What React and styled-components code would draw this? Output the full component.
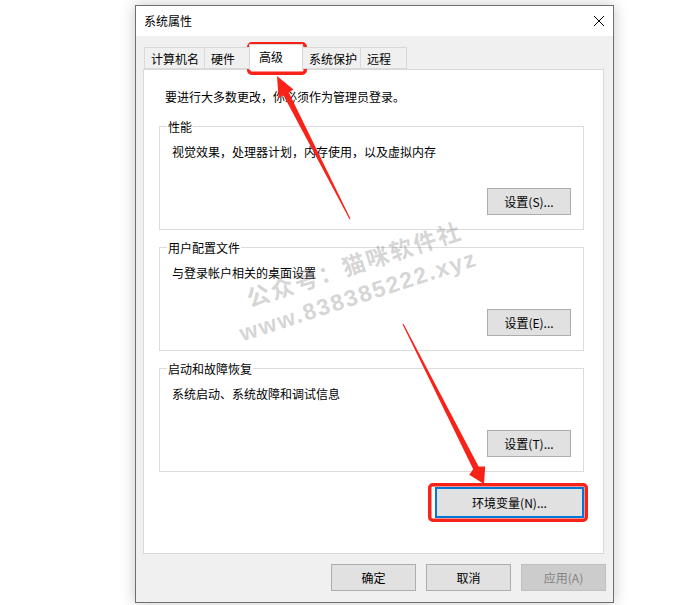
import styled, { createGlobalStyle } from "styled-components";

const GlobalStyle = createGlobalStyle`
  html, body {
    margin: 0;
    padding: 0;
    background: #fff;
  }
  body {
    font-family: "Noto Sans CJK SC", "Microsoft YaHei", sans-serif;
    font-size: 12px;
    color: #000;
  }
`;

const Page = styled.div`
  position: relative;
  width: 694px;
  height: 605px;
  padding: 5px 0 0 135px;
  box-sizing: border-box;
  overflow: hidden;
`;

const Window = styled.div`
  width: 479px;
  height: 598px;
  box-sizing: border-box;
  border: 1px solid #6f6f6f;
  box-shadow: 0 0 14px rgba(0, 0, 0, 0.22);
  background: #f0f0f0;
  display: flex;
  flex-direction: column;
`;

const TitleBar = styled.div`
  height: 30px;
  flex-shrink: 0;
  background: #fff;
  display: flex;
  align-items: center;
  justify-content: space-between;
  padding: 0 9px 0 8px;
  line-height: 16px;
`;

const Body = styled.div`
  flex: 1;
  display: flex;
  flex-direction: column;
  padding: 8px 9px 11px 7px;
`;

const TabStrip = styled.div`
  height: 25px;
  display: flex;
  align-items: flex-end;
  padding-left: 1px;
`;

const Tab = styled.div`
  position: relative;
  z-index: ${(p) => (p.$active ? 2 : 1)};
  box-sizing: border-box;
  width: ${(p) => p.$w}px;
  height: ${(p) => (p.$active ? 26 : 22)}px;
  margin-right: -1px;
  margin-bottom: ${(p) => (p.$active ? -1 : 0)}px;
  padding: ${(p) => (p.$active ? "4px 0 0 9px" : "3px 0 0 6px")};
  border: 1px solid #d9d9d9;
  border-bottom: ${(p) => (p.$active ? "none" : "1px solid #d9d9d9")};
  background: ${(p) => (p.$active ? "#fff" : "#f0f0f0")};
  line-height: 16px;
  white-space: nowrap;
`;

const Panel = styled.div`
  position: relative;
  z-index: 0;
  box-sizing: border-box;
  height: 485px;
  border: 1px solid #d9d9d9;
  background: #fff;
  display: flex;
  flex-direction: column;
  padding: 19px 19px 0 15px;
`;

const Intro = styled.div`
  line-height: 16px;
  margin: 0 0 21px 6px;
`;

const Group = styled.div`
  box-sizing: border-box;
  height: 104px;
  margin-bottom: 17px;
  border: 1px solid #dcdcdc;
  display: flex;
  flex-direction: column;
  padding: 0 12px 14px 12px;
`;

const Legend = styled.div`
  align-self: flex-start;
  margin: -8px 0 0 -5px;
  padding: 0 1px;
  background: #fff;
  line-height: 16px;
`;

const GroupText = styled.div`
  margin-top: 9px;
  line-height: 16px;
`;

const Button = styled.button`
  box-sizing: border-box;
  width: ${(p) => p.$w || 85}px;
  height: ${(p) => p.$h || 27}px;
  padding: 0;
  background: ${(p) => (p.disabled ? "#cccccc" : "#e1e1e1")};
  border: ${(p) =>
    p.$focus ? "2px solid #0078d7" : p.disabled ? "1px solid #bfbfbf" : "1px solid #adadad"};
  color: ${(p) => (p.disabled ? "#838383" : "#000")};
  font-family: inherit;
  font-size: 12px;
  line-height: 16px;
`;

const GroupButton = styled(Button)`
  margin-top: auto;
  align-self: flex-end;
`;

const EnvButton = styled(Button)`
  align-self: flex-end;
  margin-top: -2px;
`;

const Footer = styled.div`
  display: flex;
  justify-content: flex-end;
  gap: 10px;
  margin: 10px -2px 0 0;
`;

const Overlay = styled.svg`
  position: absolute;
  left: 0;
  top: 0;
  pointer-events: none;
`;

const Watermark = styled.div`
  position: absolute;
  left: ${(p) => p.$x}px;
  top: ${(p) => p.$y}px;
  transform: rotate(-18deg);
  transform-origin: left center;
  font-family: ${(p) => p.$font};
  font-weight: 700;
  font-size: 23px;
  line-height: 28px;
  letter-spacing: ${(p) => p.$ls}px;
  color: rgba(110, 110, 110, 0.3);
  white-space: nowrap;
  pointer-events: none;
`;

const tabs = [
  { label: "计算机名", w: 61 },
  { label: "硬件", w: 46 },
  { label: "高级", w: 54, active: true },
  { label: "系统保护", w: 59 },
  { label: "远程", w: 47 },
];

const groups = [
  { title: "性能", text: "视觉效果，处理器计划，内存使用，以及虚拟内存", button: "设置(S)..." },
  { title: "用户配置文件", text: "与登录帐户相关的桌面设置", button: "设置(E)..." },
  { title: "启动和故障恢复", text: "系统启动、系统故障和调试信息", button: "设置(T)..." },
];

function CloseIcon() {
  return (
    <svg width="10" height="10" viewBox="0 0 10 10">
      <path d="M0 0 L10 10 M10 0 L0 10" stroke="#000" strokeWidth="1" fill="none" />
    </svg>
  );
}

export default function App() {
  return (
    <>
      <GlobalStyle />
      <Page>
        <Window>
          <TitleBar>
            <span>系统属性</span>
            <CloseIcon />
          </TitleBar>
          <Body>
            <TabStrip>
              {tabs.map((t) => (
                <Tab key={t.label} $w={t.w} $active={t.active}>
                  {t.label}
                </Tab>
              ))}
            </TabStrip>
            <Panel>
              <Intro>要进行大多数更改，你必须作为管理员登录。</Intro>
              {groups.map((g) => (
                <Group key={g.title}>
                  <Legend>{g.title}</Legend>
                  <GroupText>{g.text}</GroupText>
                  <GroupButton $w={84}>{g.button}</GroupButton>
                </Group>
              ))}
              <EnvButton $w={149} $h={31} $focus>
                环境变量(N)...
              </EnvButton>
            </Panel>
            <Footer>
              <Button>确定</Button>
              <Button>取消</Button>
              <Button disabled>应用(A)</Button>
            </Footer>
          </Body>
        </Window>

        <Watermark $x={247} $y={284} $ls={2} $font={'"Noto Sans CJK SC", sans-serif'}>
          公众号：猫咪软件社
        </Watermark>
        <Watermark $x={240} $y={320} $ls={1.8} $font={'"Liberation Sans", sans-serif'}>
          www.838385222.xyz
        </Watermark>

        <Overlay width="694" height="605" viewBox="0 0 694 605">
          <rect x="248.75" y="43.75" width="56.5" height="29.5" rx="3" fill="none" stroke="#f82318" strokeWidth="3.5" />
          <rect x="429.75" y="484.75" width="156.5" height="35.5" rx="3" fill="none" stroke="#f82318" strokeWidth="3.5" />
          <polygon
            fill="#f82318"
            points="277,76 293.5,89.5 288.8,92.4 350.5,218.7 349.5,219.3 283.4,95.2 278.6,98.2"
          />
          <polygon
            fill="#f82318"
            points="484,484 485.2,466.5 478.6,466.6 403.5,323.7 402.5,324.3 473.2,469.3 469.2,474.7"
          />
        </Overlay>
      </Page>
    </>
  );
}
